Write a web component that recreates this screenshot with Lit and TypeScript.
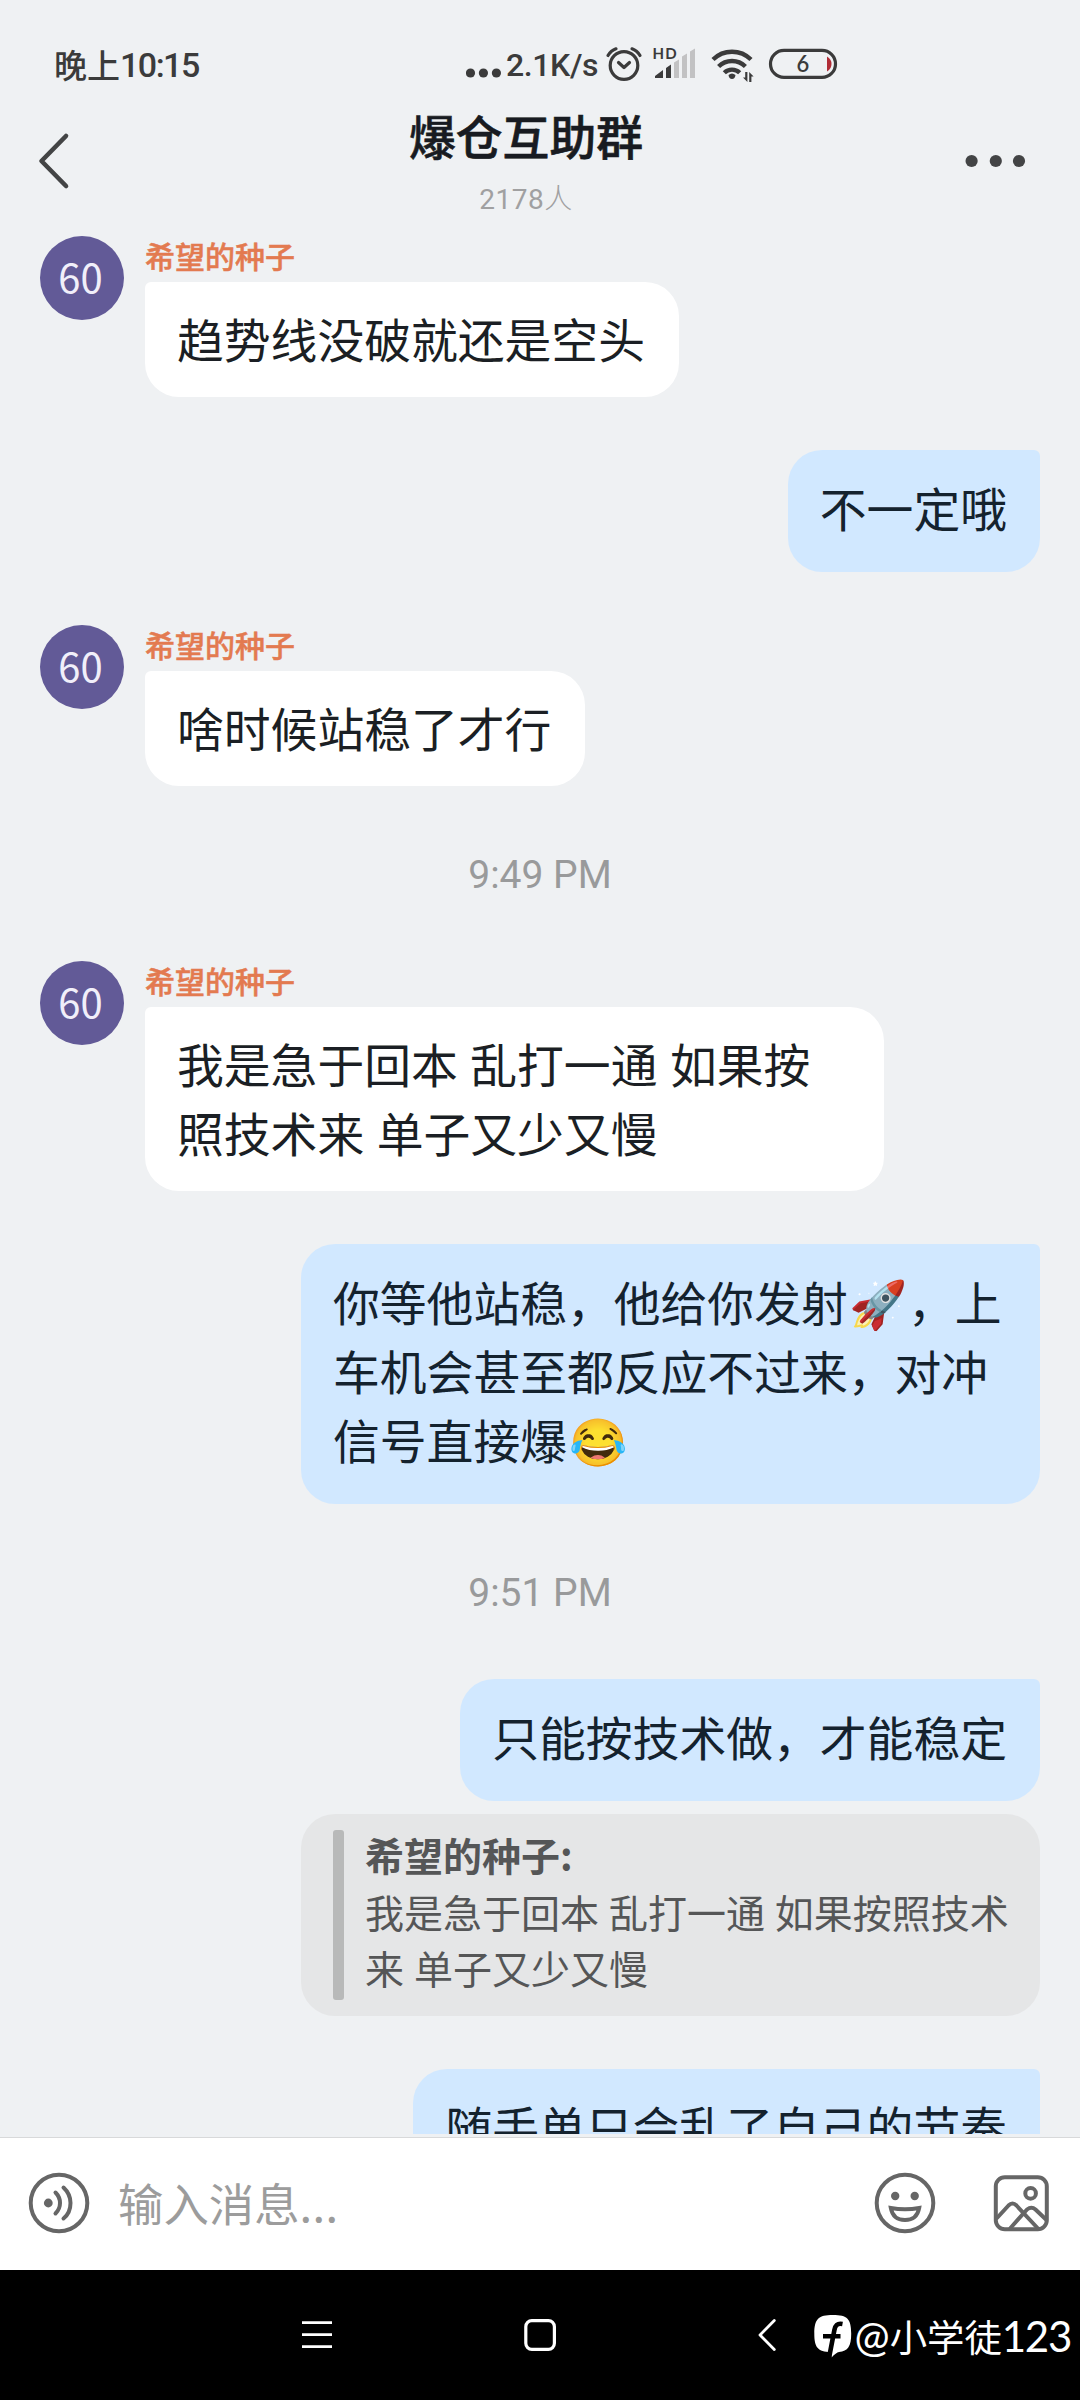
import { LitElement, html, css, nothing } from "lit";
import { customElement, property } from "lit/decorators.js";

type Entry =
  | { kind: "in"; text: string; gap: number }
  | { kind: "out"; text: string; gap: number; quote?: { author: string; text: string } }
  | { kind: "time"; text: string; gap: number };

const SENDER = "希望的种子";

const ENTRIES: Entry[] = [
  { kind: "in", text: "趋势线没破就还是空头", gap: 16 },
  { kind: "out", text: "不一定哦", gap: 53 },
  { kind: "in", text: "啥时候站稳了才行", gap: 53 },
  { kind: "time", text: "9:49 PM", gap: 64 },
  { kind: "in", text: "我是急于回本 乱打一通 如果按\n照技术来 单子又少又慢", gap: 61 },
  {
    kind: "out",
    text: "你等他站稳，他给你发射🚀，上\n车机会甚至都反应不过来，对冲\n信号直接爆😂",
    gap: 53,
  },
  { kind: "time", text: "9:51 PM", gap: 64 },
  {
    kind: "out",
    text: "只能按技术做，才能稳定",
    gap: 61,
    quote: { author: SENDER, text: "我是急于回本 乱打一通 如果按照技术\n来 单子又少又慢" },
  },
  { kind: "out", text: "随手单只会乱了自己的节奏", gap: 53 },
];

@customElement("status-bar")
class StatusBar extends LitElement {
  static styles = css`
    :host {
      display: flex;
      align-items: center;
      padding: 40px 242px 12px 54px;
      color: #3b3b3b;
      fill: #3b3b3b;
    }
    svg { display: block; flex: none; }
    .clock {
      display: flex;
      align-items: center;
      margin-right: auto;
      line-height: 50px;
      white-space: nowrap;
    }
    .day { font: 500 33px/50px "Noto Sans CJK SC", sans-serif; margin-top: -2px; }
    .digits { font: 500 34px/50px Roboto, sans-serif; letter-spacing: -1.5px; }
    .speed {
      width: 100px;
      padding-left: 5px;
      font: 500 32px/50px Roboto, sans-serif;
      letter-spacing: -0.4px;
      box-sizing: border-box;
      white-space: nowrap;
    }
    .alarm { margin-left: 4px; }
    .cell { margin-left: 9px; }
    .wifi { margin-left: 13px; }
    .battery { margin-left: 14px; }
    .line { fill: none; stroke: #3b3b3b; stroke-width: 3.2; stroke-linecap: round; stroke-linejoin: round; }
    .hd { font: 700 15px Lato, sans-serif; }
    .pct { font: 600 22px Lato, sans-serif; text-anchor: middle; }
    .dim { fill: #c2c2c3; }
    .red { fill: #b02c36; }
    .arc { fill: none; stroke: #3b3b3b; stroke-width: 4.4; }
  `;
  render() {
    return html`
      <div class="clock"><span class="day">晚上</span><span class="digits">10:15</span></div>
      <svg width="35" height="50" viewBox="467 40 35 50">
        <circle cx="471.5" cy="73" r="4.6" /><circle cx="484.4" cy="73" r="4.6" /><circle cx="497.4" cy="73" r="4.6" />
      </svg>
      <span class="speed">2.1K/s</span>
      <svg class="alarm" width="38" height="50" viewBox="605 40 38 50">
        <circle class="line" cx="624" cy="65.5" r="13.8" />
        <path class="line" d="M618.5 62.5 L624 67.5 L629.5 62.5" />
        <path class="line" d="M608 55.5 Q611 50.5 616 48.8 M640 55.5 Q637 50.5 632 48.8" />
      </svg>
      <svg class="cell" width="45" height="50" viewBox="652 40 45 50">
        <text class="hd" x="652.6" y="59" textLength="24">HD</text>
        <path d="M655 78 V76 L663 70 V78 Z M666 78 V68 L671 64.5 V78 Z" />
        <path class="dim" d="M674 78 V62.5 L679 59.5 V78 Z M682 78 V56.5 L687 53.5 V78 Z M690 78 V51.5 L695 48.5 V78 Z" />
      </svg>
      <svg class="wifi" width="44" height="50" viewBox="710 40 44 50">
        <path class="arc" d="M713 59.5 A27 27 0 0 1 751 59.5" />
        <path class="arc" d="M718.6 66.5 A19 19 0 0 1 745.4 66.5" />
        <path class="arc" d="M724.3 72.8 A11 11 0 0 1 739.7 72.8" />
        <path d="M728.5 75 Q732 72 735.5 75 Q735 79 732 79 Q729 79 728.5 75 Z" />
        <path d="M745.2 72 H747.4 V82 L743 77.5 H745.2 Z M749.2 82 H751.4 V76.5 H753.6 L749.2 72 Z" />
      </svg>
      <svg class="battery" width="70" height="50" viewBox="768 40 70 50">
        <rect class="line" x="770.5" y="50.4" width="65" height="27" rx="13.5" />
        <path class="red" d="M827 56.5 Q831.5 59 831.5 64 Q831.5 69 827 71.5 Z" />
        <text class="pct" x="803" y="72">6</text>
      </svg>
    `;
  }
}

@customElement("chat-header")
class ChatHeader extends LitElement {
  static styles = css`
    :host {
      display: grid;
      grid-template-columns: 200px 652px 1fr;
      align-items: center;
      height: 118px;
      fill: #434445;
    }
    svg { display: block; }
    .back { margin-left: 35px; fill: none; stroke: #434445; stroke-width: 4.6; stroke-linecap: round; stroke-linejoin: round; }
    .more { margin-left: 110px; }
    .heading { align-self: start; text-align: center; padding-top: 3px; }
    .title { font: 500 46.8px/60px "Noto Sans CJK SC", sans-serif; color: #181b21; -webkit-text-stroke: 0.6px #181b21; }
    .count { margin-top: 18px; font: 400 28px/34px Roboto, "Noto Sans CJK SC", sans-serif; color: #a0a0a1; letter-spacing: 0.5px; }
    .person { font-size: 28px; font-weight: 300; line-height: 30px; }
  `;
  render() {
    return html`
      <svg class="back" width="38" height="60" viewBox="34 131 38 60"><path d="M65 136 L40.5 161 L65 186" /></svg>
      <div class="heading">
        <div class="title">爆仓互助群</div>
        <div class="count">2178<span class="person">人</span></div>
      </div>
      <svg class="more" width="64" height="16" viewBox="962 153 64 16">
        <circle cx="971.6" cy="161" r="6.1" /><circle cx="995.8" cy="161" r="6.1" /><circle cx="1019" cy="161" r="6.1" />
      </svg>
    `;
  }
}

@customElement("chat-entry")
class ChatEntry extends LitElement {
  @property({ attribute: false }) entry!: Entry;
  static styles = css`
    :host { display: block; }
    .incoming { display: flex; align-items: flex-start; gap: 21px; padding-left: 40px; }
    .avatar {
      width: 84px; height: 84px; border-radius: 50%; background: #625a97; color: #f1effa;
      font: 400 40px/80px "Noto Sans CJK SC", sans-serif; text-align: center;
      box-sizing: border-box; padding-right: 3px;
    }
    .name {
      height: 46px; font: 500 30px/38px "Noto Sans CJK SC", sans-serif; color: #e37a50;
      -webkit-text-stroke: 0.5px #e37a50;
    }
    .outgoing { display: flex; flex-direction: column; align-items: flex-end; padding-right: 40px; }
    .bubble {
      width: fit-content; box-sizing: border-box; max-width: 739px;
      font: 400 46.8px/69px "Noto Sans CJK SC", "Noto Color Emoji", sans-serif;
      text-spacing-trim: space-all;
      word-spacing: 2px;
      white-space: pre;
    }
    .line { display: block; height: 69px; }
    .emoji { margin-left: 2px; }
    .theirs { padding: 21px 34px 25px 32px; border-radius: 6px 34px 34px 34px; background: #fff; color: #1b1f24; }
    .mine { padding: 22px 33px 31px 32px; border-radius: 34px 6px 34px 34px; background: #d1e8ff; color: #14222e; }
    .full { width: 739px; }
    .time { text-align: center; font: 400 39px/50px Roboto, sans-serif; color: #999a9b; }
    .quote {
      display: flex; gap: 21px; width: 739px; height: 202px; margin-top: 13px; padding: 16px 0 16px 32px;
      box-sizing: border-box; border-radius: 34px; background: #e5e6e7;
    }
    .rule { width: 11px; border-radius: 3px; background: #b8b9b9; }
    .body {
      color: #555657; font: 400 39px/56px "Noto Sans CJK SC", sans-serif; white-space: pre;
      word-spacing: 1.2px; margin-top: -4px;
    }
    .author { font-weight: 700; height: 57px; }
  `;
  private lines(text: string) {
    return text.split("\n").map((line) => {
      const parts = line.split(/(\p{Extended_Pictographic})/u);
      return html`<span class="line">${parts.map((p, i) => (i % 2 ? html`<span class="emoji">${p}</span>` : p))}</span>`;
    });
  }
  render() {
    const e = this.entry;
    const full = e.text.includes("\n") ? "full" : "";
    if (e.kind === "time") return html`<div class="time">${e.text}</div>`;
    if (e.kind === "in") {
      return html`
        <div class="incoming">
          <div class="avatar">60</div>
          <div><div class="name">${SENDER}</div><div class="bubble theirs ${full}">${this.lines(e.text)}</div></div>
        </div>`;
    }
    return html`
      <div class="outgoing">
        <div class="bubble mine ${full}">${this.lines(e.text)}</div>
        ${e.quote
          ? html`<div class="quote"><div class="rule"></div><div class="body"><div class="author">${e.quote.author}:</div>${e.quote.text}</div></div>`
          : nothing}
      </div>`;
  }
}

@customElement("chat-composer")
class ChatComposer extends LitElement {
  static styles = css`
    :host {
      display: flex; align-items: center; height: 130px; padding: 0 28px 2px;
      border-top: 1px solid #d8d9da; background: #fff;
    }
    svg { display: block; flex: none; fill: none; stroke: #666; stroke-width: 4; stroke-linecap: round; stroke-linejoin: round; }
    .solid { fill: #666; stroke: none; }
    .hint { flex: 1; margin-left: 28px; font: 400 45.4px/60px "Noto Sans CJK SC", sans-serif; color: #9c9c9c; margin-top: -3px; }
    .dots { letter-spacing: 0.4px; }
    .photo { margin-left: 54px; }
  `;
  render() {
    return html`
      <svg width="62" height="62" viewBox="28 2172 62 62">
        <circle cx="59" cy="2203" r="28.3" />
        <circle class="solid" cx="48.3" cy="2203" r="4.4" />
        <path d="M55.5 2192.5 Q60 2197 60 2203 Q60 2209 55.5 2213.5" />
        <path d="M63.5 2187.5 Q70.5 2194 70.5 2203 Q70.5 2213 63.5 2218.5" />
      </svg>
      <div class="hint">输入消息<span class="dots">...</span></div>
      <svg width="62" height="62" viewBox="874 2172 62 62">
        <circle cx="905" cy="2203" r="28.3" />
        <circle class="solid" cx="895.2" cy="2196" r="4.2" /><circle class="solid" cx="914.7" cy="2196" r="4.2" />
        <path stroke-linejoin="miter" d="M890.8 2208 Q905 2210.5 919.2 2208 Q917 2220 905 2220 Q893 2220 890.8 2208 Z" />
      </svg>
      <svg class="photo" width="62" height="62" viewBox="990 2172 62 62">
        <rect x="995.8" y="2177.3" width="51" height="52" rx="9" />
        <circle cx="1030.6" cy="2193.4" r="5.3" />
        <path d="M997 2218 L1008.5 2205.5 Q1012.5 2201.5 1016.5 2205.5 L1037.5 2228" />
        <path d="M1010.5 2228 L1027 2209.5 Q1031.5 2206 1035.5 2209.5 L1046 2219.5" />
      </svg>
    `;
  }
}

@customElement("nav-bar")
class NavBar extends LitElement {
  static styles = css`
    :host {
      position: relative; display: flex; align-items: center; height: 130px; box-sizing: border-box;
      padding-left: 300px; background: #000; fill: none; stroke: #fff; stroke-width: 2.8;
    }
    svg { display: block; flex: none; }
    .home { margin-left: 188px; stroke-width: 3.2; }
    .back { margin-left: 200px; stroke-linecap: round; stroke-linejoin: round; }
    .mark { position: absolute; right: 9px; top: 36px; display: flex; align-items: center; gap: 2px; height: 60px; color: #fff; }
    .logo { fill: #fff; stroke: none; }
    .cut { fill: none; stroke: #000; stroke-width: 4.6; }
    .handle { display: flex; align-items: center; white-space: nowrap; }
    .latin { font: 400 42px/60px Lato, sans-serif; }
    .han { font: 400 37.4px/54px "Noto Sans CJK SC", sans-serif; }
    .num { letter-spacing: -1.3px; }
  `;
  render() {
    return html`
      <svg width="34" height="34" viewBox="300 2318 34 34"><path d="M302 2322.7 H332 M302 2334.7 H332 M302 2346.7 H332" /></svg>
      <svg class="home" width="36" height="36" viewBox="522 2317 36 36"><rect x="525.8" y="2320.7" width="28.6" height="28.6" rx="6" /></svg>
      <svg class="back" width="20" height="36" viewBox="758 2317 20 36"><path d="M774.3 2320.5 L760 2335 L774.3 2349.5" /></svg>
      <div class="mark">
        <svg class="logo" width="38" height="44" viewBox="815 2319 38 44">
          <path d="M833.8 2320 C848.5 2320 852.2 2324 852.2 2338.5 C852.2 2351.5 849 2356 840 2357 Q837 2357.5 832.6 2362.5 L832 2357 C818.5 2357 815.3 2352 815.3 2338.5 C815.3 2324 819.5 2320 833.8 2320 Z" />
          <path class="cut" d="M843.5 2329 C838 2328 836.2 2330.5 835.4 2335 L830 2363 M824 2341.2 H841.5" />
        </svg>
        <div class="handle"><span class="latin">@</span><span class="han">小学徒</span><span class="latin num">123</span></div>
      </div>
    `;
  }
}

@customElement("app-root")
class AppRoot extends LitElement {
  static styles = css`
    :host { display: flex; flex-direction: column; width: 1080px; height: 2400px; overflow: hidden; background: #eff1f3; }
    status-bar { box-sizing: border-box; height: 102px; flex: none; }
    chat-header, chat-composer, nav-bar { flex: none; }
    .messages { flex: 1; min-height: 0; overflow: hidden; margin-bottom: 3px; }
    .g16 { margin-top: 16px; }
    .g53 { margin-top: 53px; }
    .g61 { margin-top: 61px; }
    .g64 { margin-top: 64px; }
  `;
  render() {
    return html`
      <status-bar></status-bar>
      <chat-header></chat-header>
      <div class="messages">
        ${ENTRIES.map((e) => html`<chat-entry class="g${e.gap}" .entry=${e}></chat-entry>`)}
      </div>
      <chat-composer></chat-composer>
      <nav-bar></nav-bar>
    `;
  }
}
